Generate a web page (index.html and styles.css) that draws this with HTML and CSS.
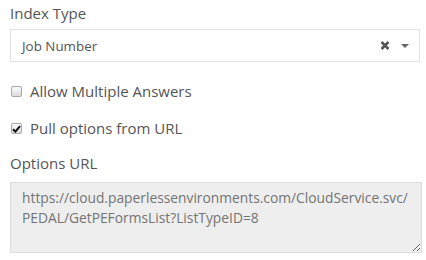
FILE: index.html
```html
<!DOCTYPE html>
<html>
<head>
<meta charset="utf-8">
<link rel="stylesheet" href="styles.css">
</head>
<body>
<div class="form">
  <div class="label">Index Type</div>
  <div class="select">
    <span class="select-value">Job Number</span>
    <span class="select-clear"><svg width="10" height="9" viewBox="0 0 10 9"><path d="M1.5 1 L8.5 8 M8.5 1 L1.5 8" stroke="#555" stroke-width="2.6" stroke-linecap="butt"/></svg></span>
    <span class="select-caret"><svg width="8" height="4" viewBox="0 0 8 4"><path d="M0 0 H8 L4 4 Z" fill="#666"/></svg></span>
  </div>
  <label class="check-row first">
    <span class="box"></span>
    <span class="check-text">Allow Multiple Answers</span>
  </label>
  <label class="check-row second">
    <span class="box checked"><svg width="9" height="8" viewBox="0 0 9 8"><path d="M1 4.2 L3.4 6.6 L8 1.2" fill="none" stroke="#111" stroke-width="2"/></svg></span>
    <span class="check-text">Pull options from URL</span>
  </label>
  <div class="label url-label">Options URL</div>
  <textarea class="url" readonly>https://cloud.paperlessenvironments.com/CloudService.svc/PEDAL/GetPEFormsList?ListTypeID=8</textarea>
</div>
</body>
</html>
```

FILE: styles.css
```css
html, body {
  margin: 0;
  padding: 0;
  background: #fff;
}
.form {
  padding: 2px 5px 0 10px;
  font-family: "Open Sans", "Noto Sans", sans-serif;
  color: #555;
}
.label {
  font-size: 15px;
  line-height: 22px;
  color: #555;
}
.select {
  margin-top: 5px;
  height: 33px;
  box-sizing: border-box;
  width: 410px;
  border: 1px solid #e3e3e3;
  display: flex;
  align-items: center;
  padding: 1px 10px 0 11px;
}
.select-value {
  flex: 1;
  font-size: 13.4px;
  color: #555;
}
.select-clear {
  display: flex;
  margin-right: 11px;
  margin-top: -1px;
}
.select-caret {
  display: flex;
  margin-top: 0;
}
.check-row {
  display: flex;
  align-items: center;
  font-size: 15px;
  line-height: 22px;
  color: #555;
}
.check-row.first {
  margin-top: 18px;
}
.check-row.second {
  margin-top: 15px;
}
.box {
  width: 11px;
  height: 11px;
  box-sizing: border-box;
  border: 1px solid #a9a9a9;
  border-radius: 2px;
  background: linear-gradient(#fafafa, #dcdcdc);
  margin: 1px 8px 0 1px;
  display: flex;
  align-items: center;
  justify-content: center;
}
.url-label {
  margin-top: 13px;
}
.url {
  display: block;
  margin-top: 8px;
  width: 412px;
  height: 71px;
  box-sizing: border-box;
  background: #eee;
  border: 1px solid #ddd;
  border-radius: 0;
  padding: 5px 13px 0 11px;
  font-family: "Open Sans", "Noto Sans", sans-serif;
  font-size: 13.8px;
  line-height: 20px;
  color: #747474;
  outline: none;
}
```
